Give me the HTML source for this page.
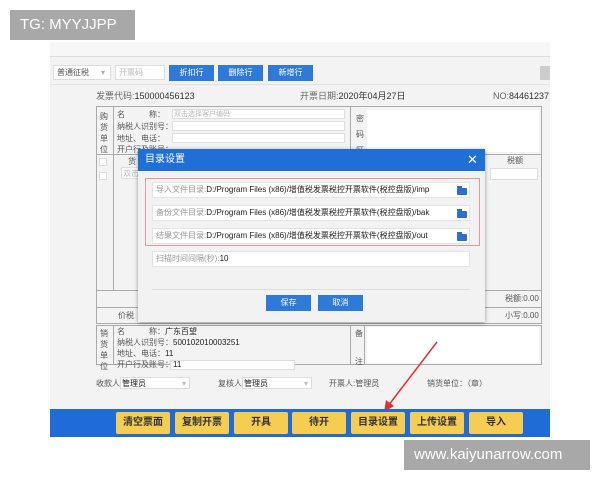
<!DOCTYPE html>
<html><head><meta charset="utf-8"><style>
*{margin:0;padding:0;box-sizing:border-box}
body{width:600px;height:480px;background:#fff;position:relative;overflow:hidden;font-family:"Liberation Sans","Noto Sans CJK SC",sans-serif;font-size:8px;color:#555}
.a{position:absolute}
.t{position:absolute;white-space:nowrap;line-height:1}
.in{position:absolute;background:#fff;border:1px solid #ddd}
.bb{position:absolute;background:#2f7ad8;color:#fff;text-align:center;font-size:8px;line-height:16px}
.yb{position:absolute;top:412px;height:22px;width:54px;background:#f5cd52;border-radius:2px;color:#333;font-weight:bold;font-size:10px;text-align:center;line-height:22px}
.fold{position:absolute;width:10px;height:7px;background:#2b6fd0;border-radius:1px}
.fold:before{content:"";position:absolute;left:0;top:-2px;width:5px;height:2px;background:#2b6fd0}
.row{position:absolute;left:152px;width:318px;height:16px;background:#fff;border:1px solid #e4e4e4;font-size:8px;line-height:14px;padding-left:3px;color:#222}
.row span{color:#999}
</style></head><body>
<div class="a" style="left:50px;top:42px;width:500px;height:395px;background:#f3f3f3"></div>
<div class="a" style="left:50px;top:42px;width:500px;height:15px;background:#f7f7f7;border-bottom:1px solid #ddd"></div>
<div class="a" style="left:50px;top:84px;width:500px;height:1px;background:#e2e2e2"></div>
<div class="in" style="left:53px;top:65px;width:58px;height:15px"></div><div class="t" style="left:57px;top:69px">普通征税</div><div class="t" style="left:101px;top:69px;color:#aaa">▾</div>
<div class="in" style="left:115px;top:65px;width:50px;height:15px"></div><div class="t" style="left:119px;top:69px;color:#bbb">开票码</div>
<div class="bb" style="left:169px;top:65px;width:45px">折扣行</div>
<div class="bb" style="left:218px;top:65px;width:45px">删除行</div>
<div class="bb" style="left:268px;top:65px;width:45px">新增行</div>
<div class="a" style="left:540px;top:66px;width:10px;height:14px;background:#ccc"></div>
<div class="t" style="left:96px;top:92px;font-size:9px;color:#666">发票代码:<span style="color:#333">150000456123</span></div>
<div class="t" style="left:300px;top:92px;font-size:9px;color:#666">开票日期:<span style="color:#333">2020年04月27日</span></div>
<div class="t" style="left:493px;top:92px;font-size:9px;color:#666">NO:<span style="color:#333">84461237</span></div>
<div class="a" style="left:96px;top:106px;width:446px;height:218px;border:1px solid #aaa;background:#f3f3f3"></div>
<div class="a" style="left:113px;top:106px;width:1px;height:184px;background:#aaa"></div>
<div class="a" style="left:96px;top:154px;width:446px;height:1px;background:#aaa"></div>
<div class="a" style="left:96px;top:290px;width:446px;height:1px;background:#aaa"></div>
<div class="a" style="left:96px;top:307px;width:446px;height:1px;background:#aaa"></div>
<div class="a" style="left:350px;top:106px;width:1px;height:48px;background:#aaa"></div>
<div class="a" style="left:367px;top:110px;width:172px;height:42px;background:#fff"></div>
<div class="t" style="left:100px;top:111px;line-height:11px;width:8px;white-space:normal">购货单位</div>
<div class="t" style="left:117px;top:111px">名　　　称：</div>
<div class="t" style="left:117px;top:123px">纳税人识别号：</div>
<div class="t" style="left:117px;top:135px">地址、电话：</div>
<div class="t" style="left:117px;top:146px">开户行及账号：</div>
<div class="in" style="left:172px;top:109px;width:173px;height:10px"></div><div class="t" style="left:174px;top:111px;color:#bbb;font-size:7px">双击选择客户编码</div>
<div class="in" style="left:172px;top:121px;width:173px;height:10px"></div>
<div class="in" style="left:172px;top:133px;width:173px;height:10px"></div>
<div class="t" style="left:356px;top:111px;line-height:16px;width:8px;white-space:normal">密码区</div>
<div class="in" style="left:99px;top:158px;width:8px;height:8px"></div>
<div class="in" style="left:99px;top:172px;width:8px;height:8px"></div>
<div class="t" style="left:128px;top:158px">货</div>
<div class="in" style="left:121px;top:167px;width:20px;height:12px"></div><div class="t" style="left:123px;top:170px;color:#bbb">双击</div>
<div class="t" style="left:507px;top:157px">税额</div>
<div class="in" style="left:490px;top:168px;width:48px;height:12px"></div>
<div class="t" style="left:505px;top:295px">税额:0.00</div>
<div class="t" style="left:505px;top:312px">小写:0.00</div>
<div class="t" style="left:118px;top:312px">价税</div>
<div class="a" style="left:96px;top:325px;width:446px;height:40px;border:1px solid #aaa;background:#f3f3f3"></div>
<div class="a" style="left:113px;top:325px;width:1px;height:40px;background:#aaa"></div>
<div class="a" style="left:350px;top:325px;width:1px;height:40px;background:#aaa"></div>
<div class="a" style="left:364px;top:325px;width:1px;height:40px;background:#aaa"></div>
<div class="a" style="left:367px;top:327px;width:172px;height:36px;background:#fff"></div>
<div class="t" style="left:100px;top:328px;line-height:11px;width:8px;white-space:normal">销货单位</div>
<div class="t" style="left:117px;top:328px">名　　　称：<span style="color:#222">广东百望</span></div>
<div class="t" style="left:117px;top:339px">纳税人识别号：<span style="color:#222">500102010003251</span></div>
<div class="t" style="left:117px;top:350px">地址、电话：<span style="color:#222">11</span></div>
<div class="in" style="left:170px;top:360px;width:125px;height:10px"></div>
<div class="t" style="left:117px;top:361px">开户行及账号：<span style="color:#222">11</span></div>
<div class="t" style="left:355px;top:330px">备</div><div class="t" style="left:355px;top:358px">注</div>
<div class="t" style="left:96px;top:380px">收款人:</div>
<div class="in" style="left:120px;top:377px;width:70px;height:12px"></div><div class="t" style="left:122px;top:380px;color:#222">管理员</div><div class="t" style="left:182px;top:380px;color:#bbb">▾</div>
<div class="t" style="left:218px;top:380px">复核人:</div>
<div class="in" style="left:242px;top:377px;width:70px;height:12px"></div><div class="t" style="left:244px;top:380px;color:#222">管理员</div><div class="t" style="left:304px;top:380px;color:#bbb">▾</div>
<div class="t" style="left:329px;top:380px">开票人:管理员</div>
<div class="t" style="left:427px;top:380px">销货单位：（章）</div>
<svg class="a" style="left:380px;top:340px" width="60" height="75"><line x1="57" y1="2" x2="8" y2="66" stroke="#e03030" stroke-width="1.5"/><path d="M4 72 L6 60 L14 66 Z" fill="#e03030"/></svg>
<div class="a" style="left:50px;top:409px;width:500px;height:28px;background:#1f6bd8"></div>
<div class="yb" style="left:116px">清空票面</div>
<div class="yb" style="left:175px">复制开票</div>
<div class="yb" style="left:234px">开具</div>
<div class="yb" style="left:292px">待开</div>
<div class="yb" style="left:351px">目录设置</div>
<div class="yb" style="left:410px">上传设置</div>
<div class="yb" style="left:469px">导入</div>
<div class="a" style="left:138px;top:149px;width:347px;height:173px;background:#f2f2f2;box-shadow:0 1px 4px rgba(0,0,0,.4)"></div>
<div class="a" style="left:138px;top:149px;width:347px;height:22px;background:#1f6fd6"></div>
<div class="t" style="left:145px;top:155px;color:#fff;font-size:10px">目录设置</div>
<div class="t" style="left:467px;top:153px;color:#fff;font-size:13px">✕</div>
<div class="a" style="left:145px;top:178px;width:335px;height:68px;border:1px solid #e29a9a"></div>
<div class="row" style="top:182px"><span>导入文件目录:</span>D:/Program Files (x86)/增值税发票税控开票软件(税控盘版)/imp</div>
<div class="row" style="top:205px"><span>备份文件目录:</span>D:/Program Files (x86)/增值税发票税控开票软件(税控盘版)/bak</div>
<div class="row" style="top:228px"><span>结果文件目录:</span>D:/Program Files (x86)/增值税发票税控开票软件(税控盘版)/out</div>
<div class="fold" style="left:457px;top:188px"></div>
<div class="fold" style="left:457px;top:211px"></div>
<div class="fold" style="left:457px;top:234px"></div>
<div class="row" style="top:251px"><span>扫描时间间隔(秒):</span>10</div>
<div class="a" style="left:152px;top:289px;width:318px;height:1px;background:#ddd"></div>
<div class="bb" style="left:266px;top:295px;width:45px">保存</div>
<div class="bb" style="left:318px;top:295px;width:45px">取消</div>
<div class="a" style="left:10px;top:10px;width:125px;height:30px;background:#a8a8a8;color:#fff;font-size:15px;line-height:30px;padding-left:10px">TG: MYYJJPP</div>
<div class="a" style="left:404px;top:440px;width:186px;height:30px;background:#a8a8a8;color:#fff;font-size:15px;line-height:30px;padding-left:10px">www.kaiyunarrow.com</div>
</body></html>
